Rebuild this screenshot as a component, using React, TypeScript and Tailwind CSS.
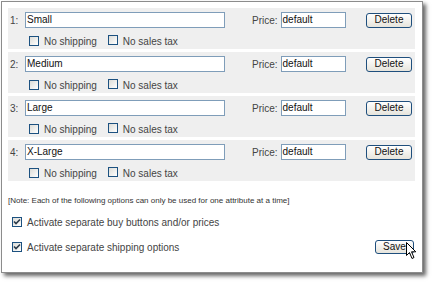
const rows = ['Small', 'Medium', 'Large', 'X-Large'];

const Checkbox = ({ checked = false }: { checked?: boolean }) => (
  <span className="relative inline-block w-[10px] h-[10px] border border-[#1c5180] bg-gradient-to-br from-[#dcdcd7] to-white shrink-0">
    {checked && (
      <svg className="absolute left-[0px] top-[0px]" width="8" height="8" viewBox="0 0 8 8">
        <path d="M1 3.5 L3 5.5 L7 1.5" fill="none" stroke="#2a3a4a" strokeWidth="1.6" />
      </svg>
    )}
  </span>
);

const XpButton = ({ label, className }: { label: string; className?: string }) => (
  <div
    className={`flex items-center justify-center border border-[#1f4f7d] rounded-[3px] bg-gradient-to-b from-white to-[#e6e4dc] text-[10px] text-[#111] leading-none ${className ?? ''}`}
  >
    {label}
  </div>
);

const OptionRow = ({ index, name }: { index: number; name: string }) => (
  <div className="h-[41px] mb-[3px] bg-[#efefef] flex flex-col pt-[4px]">
    <div className="flex items-center h-[16px]">
      <span className="w-[17px] pl-[2px] text-[10px] text-[#444]">{index}:</span>
      <div className="w-[200px] h-[16px] border border-[#7f9db9] bg-white text-[10px] text-[#111] pl-[1px] leading-[14px]">
        {name}
      </div>
      <span className="ml-[27px] text-[10px] text-[#444]">Price:</span>
      <div className="ml-[3px] w-[65px] h-[16px] border border-[#7f9db9] bg-white text-[10px] text-[#111] pl-[1px] leading-[14px]">
        default
      </div>
      <XpButton label="Delete" className="ml-auto mr-[3px] w-[46px] h-[15px]" />
    </div>
    <div className="flex items-center mt-[8px] pl-[21px] h-[10px] text-[10px] text-[#444]">
      <Checkbox />
      <span className="ml-[5px]">No shipping</span>
      <span className="ml-[11px]">
        <Checkbox />
      </span>
      <span className="ml-[5px]">No sales tax</span>
    </div>
  </div>
);

export default function App() {
  return (
    <div className="relative w-[432px] h-[282px] bg-white overflow-hidden font-['Liberation_Sans',Arial,sans-serif]">
      <div className="ml-[1px] mt-[1px] w-[422px] h-[272px] border border-[#8c8c8c] bg-white shadow-[3px_3px_4px_rgba(0,0,0,0.6)] pl-[6px] pr-[7px] pt-[6px] flex flex-col">
        {rows.map((r, i) => (
          <OptionRow key={r} index={i + 1} name={r} />
        ))}
        <div className="mt-[12px] text-[8px] leading-[9px] text-[#333]">
          [Note: Each of the following options can only be used for one attribute at a time]
        </div>
        <div className="mt-[11px] flex items-center h-[12px] pl-[4px] text-[10px] text-[#444]">
          <Checkbox checked />
          <span className="ml-[5px]">Activate separate buy buttons and/or prices</span>
        </div>
        <div className="mt-[12px] flex items-center h-[14px] pl-[4px] text-[10px] text-[#444]">
          <Checkbox checked />
          <span className="ml-[5px]">Activate separate shipping options</span>
          <XpButton label="Save" className="ml-auto mr-[1px] w-[39px] h-[14px]" />
        </div>
      </div>
      <svg className="absolute left-[406px] top-[242px]" width="12" height="18" viewBox="0 0 12 18">
        <path d="M0.5 0.5 L0.5 13.5 L3.5 10.5 L6 16.5 L8 15.5 L5.5 9.8 L9.8 9.8 Z" fill="white" stroke="black" strokeWidth="1" />
      </svg>
    </div>
  );
}
